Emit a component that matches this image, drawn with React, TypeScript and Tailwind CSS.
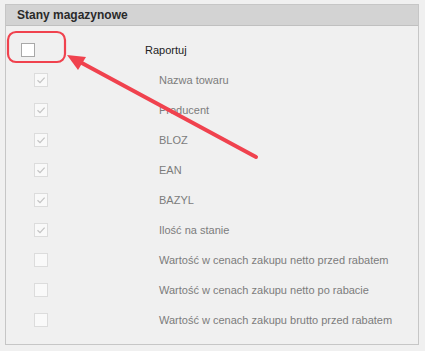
import React from "react";

const items = [
  { label: "Nazwa towaru", checked: true },
  { label: "Producent", checked: true },
  { label: "BLOZ", checked: true },
  { label: "EAN", checked: true },
  { label: "BAZYL", checked: true },
  { label: "Ilość na stanie", checked: true },
  { label: "Wartość w cenach zakupu netto przed rabatem", checked: false },
  { label: "Wartość w cenach zakupu netto po rabacie", checked: false },
  { label: "Wartość w cenach zakupu brutto przed rabatem", checked: false },
];

const Box = ({ checked, disabled }: { checked?: boolean; disabled?: boolean }) => (
  <span
    className={
      disabled
        ? "flex items-center justify-center w-[14px] h-[14px] border border-[#dcdcdc] bg-[#f9f9f9] shrink-0"
        : "flex items-center justify-center w-[14px] h-[14px] border border-[#a8a8a8] bg-white shrink-0"
    }
  >
    {checked && (
      <svg width="10" height="10" viewBox="0 0 10 10">
        <path d="M1.5 5.2 L4 7.6 L8.6 2.6" fill="none" stroke="#c4c4c4" strokeWidth="1.3" />
      </svg>
    )}
  </span>
);

export default function App() {
  return (
    <div className="relative w-[425px] h-[351px] bg-[#f0f0f0] pt-[4px] pl-[5px] font-['Liberation_Sans',Arial,sans-serif]">
      <div className="w-[414px] h-[341px] border border-[#c6c6c6] bg-[#f0f0f0]">
        <div className="h-[21px] bg-[#d3d3d3] border-b border-[#c0c0c0] flex items-center pl-[11px]">
          <span className="text-[12px] font-bold text-[#2a2a2a]">Stany magazynowe</span>
        </div>
        <div className="pt-[9px] flex flex-col text-[11px]">
          <div className="h-[30px] flex items-center pl-[15px]">
            <Box />
            <span className="ml-[110px] text-[#222]">Raportuj</span>
          </div>
          {items.map((it) => (
            <div key={it.label} className="h-[30px] flex items-center pl-[28px]">
              <Box checked={it.checked} disabled />
              <span className="ml-[111px] text-[#7c7c7c]">{it.label}</span>
            </div>
          ))}
        </div>
      </div>

      {/* annotation overlay */}
      <svg className="absolute left-0 top-0 pointer-events-none" width="425" height="351">
        <rect x="8" y="32" width="57" height="30" rx="8" fill="none" stroke="#f0424e" strokeWidth="2.2" />
        <line x1="256" y1="157" x2="80" y2="62" stroke="#f0424e" strokeWidth="4" strokeLinecap="round" />
        <polygon points="67,55 86,57 78,70" fill="#f0424e" />
      </svg>
    </div>
  );
}
